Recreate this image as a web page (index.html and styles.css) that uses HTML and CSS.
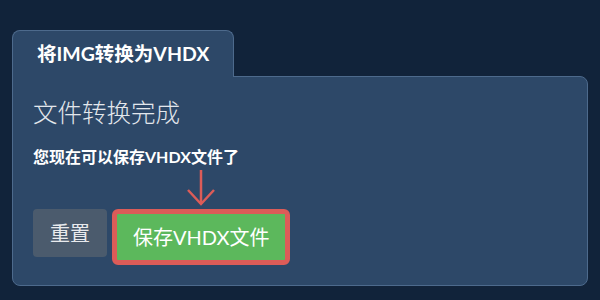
FILE: index.html
```html
<!DOCTYPE html>
<html lang="zh-CN">
<head>
    <meta charset="UTF-8">
    <meta name="viewport" content="width=device-width, initial-scale=1.0">
    <title>将IMG转换为VHDX</title>
    <link rel="stylesheet" href="styles.css">
</head>
<body>
    <div class="converter">
        <div class="tab">将IMG转换为VHDX</div>
        <div class="panel">
            <h2 class="title">文件转换完成</h2>
            <p class="message">您现在可以保存VHDX文件了</p>
            <div class="actions">
                <button type="button" class="btn btn-reset">重置</button>
                <span class="highlight">
                    <svg class="hint-arrow" width="30" height="36" viewBox="0 0 30 36">
                        <line x1="15" y1="0" x2="15" y2="34" />
                        <polyline points="2,20 15,34 28,20" />
                    </svg>
                    <button type="button" class="btn btn-save">保存VHDX文件</button>
                </span>
            </div>
        </div>
    </div>
</body>
</html>
```

FILE: styles.css
```css
body {
    margin: 0;
    padding: 30px 12px 0;
    background-color: #11233a;
    font-family: Lato, "Noto Sans CJK SC", sans-serif;
    color: #fff;
}
.converter {
    display: flex;
    flex-direction: column;
    align-items: flex-start;
}
.tab {
    position: relative;
    z-index: 1;
    padding: 10px 24px;
    line-height: 26px;
    font-size: 19.5px;
    font-weight: bold;
    background: #2d4868;
    border: 1px solid #4d6a8c;
    border-bottom: none;
    border-radius: 8px 8px 0 0;
    margin-bottom: -1px;
}
.panel {
    align-self: stretch;
    background: #2d4868;
    border: 1px solid #4d6a8c;
    border-radius: 0 8px 8px 8px;
    padding: 20px 20px 20px;
}
.title {
    margin: 0;
    font-size: 24.5px;
    line-height: 32px;
    font-weight: 300;
    color: #e3e7ec;
}
.message {
    margin: 16px 0 0;
    font-size: 16px;
    line-height: 24px;
    font-weight: bold;
}
.actions {
    display: flex;
    align-items: flex-start;
    gap: 5px;
    margin-top: 40px;
}
.btn {
    font-family: inherit;
    font-size: 20px;
    line-height: 28px;
    border: none;
    border-radius: 4px;
    color: #fff;
    cursor: pointer;
}
.btn-reset {
    background: #4b5b6d;
    color: #e8eaed;
    padding: 10px 17px;
}
.btn-save {
    display: block;
    background: #5cb85c;
    padding: 9px 16px;
    border: 5px solid #dc5c58;
    border-radius: 6px;
}
.highlight {
    position: relative;
}
.hint-arrow {
    position: absolute;
    left: 50%;
    top: -39px;
    margin-left: -15px;
    fill: none;
    stroke: #dc5c58;
    stroke-width: 2.5;
}
```
